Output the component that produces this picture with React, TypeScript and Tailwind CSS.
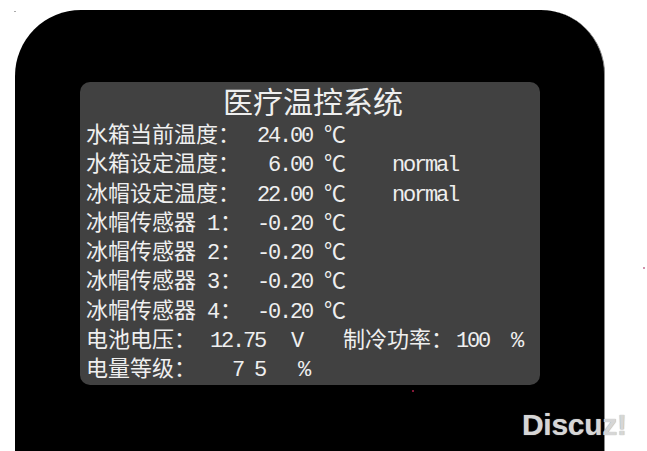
const cjk = "font-['Noto_Sans_CJK_SC',sans-serif]";
const mono = "font-['Liberation_Mono','Noto_Sans_CJK_SC',monospace] text-[22px] tracking-[-2.2px]";

type TempRow = { label: string; value: string; note?: string };

const tempRows: TempRow[] = [
  { label: "水箱当前温度：", value: "24.00" },
  { label: "水箱设定温度：", value: "6.00", note: "normal" },
  { label: "冰帽设定温度：", value: "22.00", note: "normal" },
  { label: "冰帽传感器 1：", value: "-0.20" },
  { label: "冰帽传感器 2：", value: "-0.20" },
  { label: "冰帽传感器 3：", value: "-0.20" },
  { label: "冰帽传感器 4：", value: "-0.20" },
];

function Label({ text, className }: { text: string; className: string }) {
  // split the sensor number out so it gets the half-width font
  const m = text.match(/^(.*?)( \d)(：)$/);
  if (m) {
    return (
      <span className={`${className} whitespace-pre`}>
        <span className={cjk}>{m[1]}</span>
        <span className={mono}>{m[2]}</span>
        <span className={`${cjk} ml-[2px]`}>{m[3]}</span>
      </span>
    );
  }
  return <span className={`${className} whitespace-pre ${cjk}`}>{text}</span>;
}

const rowCls = "flex h-[29.25px] items-baseline leading-[29.25px]";

function Row({ row }: { row: TempRow }) {
  return (
    <div className={rowCls}>
      <Label text={row.label} className="w-[154px] shrink-0" />
      <span className={`w-[72px] shrink-0 text-right ${mono}`}>{row.value}</span>
      <span className={`ml-[12px] w-[22px] shrink-0 ${cjk}`}>℃</span>
      {row.note && <span className={`ml-[46px] ${mono}`}>{row.note}</span>}
    </div>
  );
}

export default function App() {
  return (
    <div className="relative h-[451px] w-[647px] overflow-hidden bg-white">
      <div className="ml-[15px] mt-[10px] h-[441px] w-[590px] rounded-tl-[66px] rounded-tr-[64px] border-r border-[#8a8a8a] bg-black pl-[65px] pt-[72px]">
        <div className="h-[303px] w-[460px] rounded-[10px] bg-[#414141] pl-[6px] text-[22px] text-[#efefef]">
          <div className={`h-[36px] text-center text-[30px] leading-[36px] ${cjk}`}>
            医疗温控系统
          </div>
          {tempRows.map((r) => (
            <Row key={r.label} row={r} />
          ))}
          <div className={rowCls}>
            <span className={`w-[110px] shrink-0 ${cjk}`}>电池电压：</span>
            <span className={`w-[69px] shrink-0 text-right ${mono}`}>12.75</span>
            <span className={`ml-[26px] w-[11px] shrink-0 ${mono}`}>V</span>
            <span className={`ml-[41px] w-[110px] shrink-0 ${cjk}`}>制冷功率：</span>
            <span className={`ml-[3px] w-[35px] shrink-0 ${mono}`}>100</span>
            <span className={`ml-[20px] ${mono}`}>%</span>
          </div>
          <div className={rowCls}>
            <span className={`w-[110px] shrink-0 ${cjk}`}>电量等级：</span>
            <span className={`w-[69px] shrink-0 whitespace-pre text-right ${mono}`}>7 5</span>
            <span className={`ml-[33px] ${mono}`}>%</span>
          </div>
        </div>
      </div>

      <span className="absolute left-[412px] top-[390px] h-[2px] w-[2px] rounded-full bg-[#b0204a]" />
      <span className="absolute left-[643px] top-[267px] h-[2px] w-[2px] rounded-full bg-[#c07090]" />
      <span className="absolute left-[14px] top-[11px] h-[1px] w-[2px] bg-[#aaaaaa]" />

      <span className="absolute left-[522px] top-[407px] font-['Liberation_Sans',sans-serif] text-[30px] font-bold leading-[36px] tracking-[-0.3px] text-[#d6d6d6] [text-shadow:0_0_1px_#8c8c8c]">
        Discuz!
      </span>
    </div>
  );
}
